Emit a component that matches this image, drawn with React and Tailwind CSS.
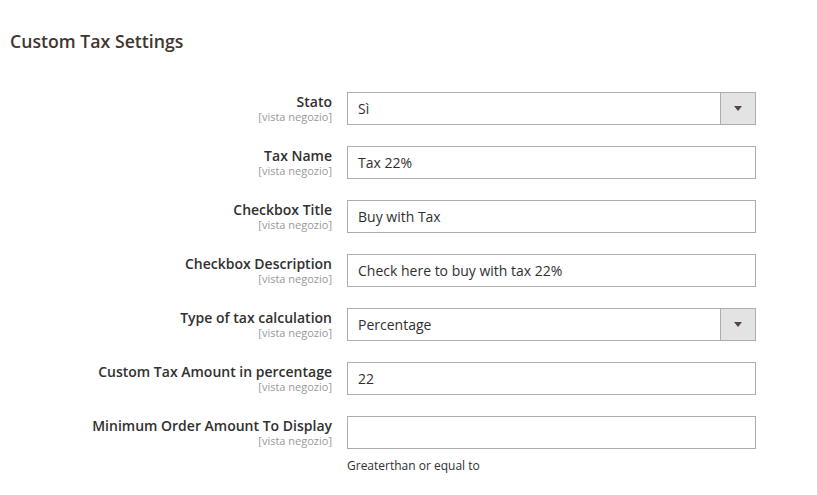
import React from "react";

const fields = [
  { label: "Stato", value: "Sì", select: true },
  { label: "Tax Name", value: "Tax 22%" },
  { label: "Checkbox Title", value: "Buy with Tax" },
  { label: "Checkbox Description", value: "Check here to buy with tax 22%" },
  { label: "Type of tax calculation", value: "Percentage", select: true },
  { label: "Custom Tax Amount in percentage", value: "22" },
  { label: "Minimum Order Amount To Display", value: "", note: "Greaterthan or equal to" },
];

const Field = ({ label, value, select, note }) => (
  <div className="flex items-start gap-[15px]">
    <div className="w-[322px] shrink-0 text-right pt-[1px]">
      <div className="text-[14px] leading-[17px] font-semibold text-[#303030]">{label}</div>
      <div className="text-[11px] leading-[13px] text-[#999999]">[vista negozio]</div>
    </div>
    <div className="w-[409px]">
      <div className="flex h-[33px] border border-[#adadad] bg-white">
        <div className="flex-1 flex items-center px-[10px] text-[14px] text-[#303030]">{value}</div>
        {select && (
          <div className="w-[35px] flex items-center justify-center bg-[#e3e3e3] border-l border-[#adadad]">
            <svg width="8" height="5" viewBox="0 0 8 5">
              <path d="M0 0h8L4 5z" fill="#514943" />
            </svg>
          </div>
        )}
      </div>
      {note && <div className="mt-[9px] text-[12px] leading-[15px] text-[#303030]">{note}</div>}
    </div>
  </div>
);

export default function App() {
  return (
    <div className="w-[817px] h-[495px] bg-white px-[10px] pt-[29px]" style={{ fontFamily: '"Open Sans", sans-serif' }}>
      <h2 className="text-[17.7px] leading-[24px] font-semibold text-[#41362f]">Custom Tax Settings</h2>
      <div className="mt-[39px] flex flex-col gap-[21px]">
        {fields.map((f) => (
          <Field key={f.label} {...f} />
        ))}
      </div>
    </div>
  );
}
